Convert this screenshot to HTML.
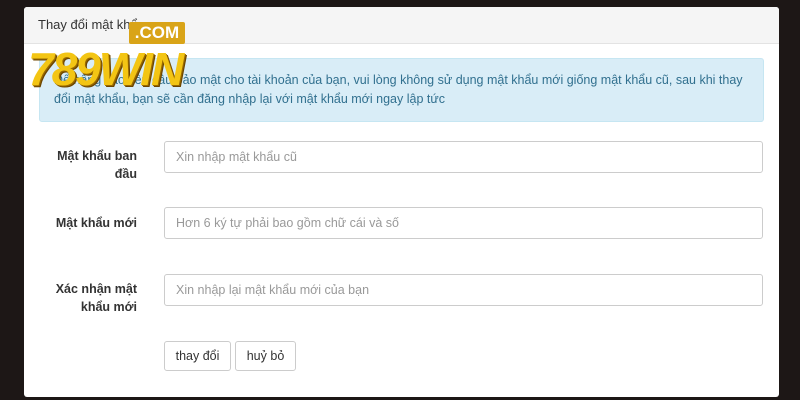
<!DOCTYPE html>
<html><head><meta charset="utf-8"><style>
body{margin:0;width:800px;height:400px;background:#1d1716;position:relative;overflow:hidden;font-family:"Liberation Sans",Arial,sans-serif;}
.panel{position:absolute;left:24px;top:7px;width:755px;height:390px;background:#fff;border-radius:3px;}
.hdr{height:36px;background:#f5f5f5;border-bottom:1px solid #e3e3e3;border-radius:3px 3px 0 0;font-size:13px;color:#333;line-height:36px;padding-left:14px;}
.alert{position:absolute;left:15px;top:51px;width:725px;height:64px;background:#d9edf7;border:1px solid #c6e6f2;border-radius:3px;color:#31708f;font-size:12.5px;line-height:19px;padding:12px 20px 0 14px;box-sizing:border-box;}
.lbl{position:absolute;right:642px;width:100px;text-align:right;font-weight:bold;font-size:12.5px;color:#333;line-height:18px;}
.inp{position:absolute;left:140px;width:599px;height:32px;border:1px solid #ccc;border-radius:3px;box-sizing:border-box;font-size:12.5px;color:#999;line-height:30px;padding-left:11px;}
.btn{position:absolute;top:334px;height:30px;border:1px solid #ccc;border-radius:3px;box-sizing:border-box;font-size:12.5px;color:#333;line-height:28px;text-align:center;}
.logo{position:absolute;left:28px;top:44px;font-size:46px;font-weight:bold;font-style:italic;color:#f3c514;letter-spacing:-2px;text-shadow:1px 1px 0 #9a6a00,2px 2px 0 #6b4500;line-height:50px;}
.com{position:absolute;left:129px;top:22px;width:56px;height:22px;background:#d9a418;border-radius:2px;color:#fff;font-weight:bold;font-size:17px;line-height:22px;text-align:center;}
</style></head><body>
<div class="panel">
<div class="hdr">Thay đổi mật khẩu</div>
<div class="alert">Để nâng cao yêu cầu bảo mật cho tài khoản của bạn, vui lòng không sử dụng mật khẩu mới giống mật khẩu cũ, sau khi thay đổi mật khẩu, bạn sẽ cần đăng nhập lại với mật khẩu mới ngay lập tức</div>
<div class="lbl" style="top:140px">Mật khẩu ban đầu</div>
<div class="inp" style="top:134px">Xin nhập mật khẩu cũ</div>
<div class="lbl" style="top:207px">Mật khẩu mới</div>
<div class="inp" style="top:200px">Hơn 6 ký tự phải bao gồm chữ cái và số</div>
<div class="lbl" style="top:273px">Xác nhận mật khẩu mới</div>
<div class="inp" style="top:267px">Xin nhập lại mật khẩu mới của bạn</div>
<div class="btn" style="left:140px;width:67px">thay đổi</div>
<div class="btn" style="left:211px;width:61px">huỷ bỏ</div>
</div>
<div class="com">.COM</div>
<div class="logo">789WIN</div>
</body></html>
